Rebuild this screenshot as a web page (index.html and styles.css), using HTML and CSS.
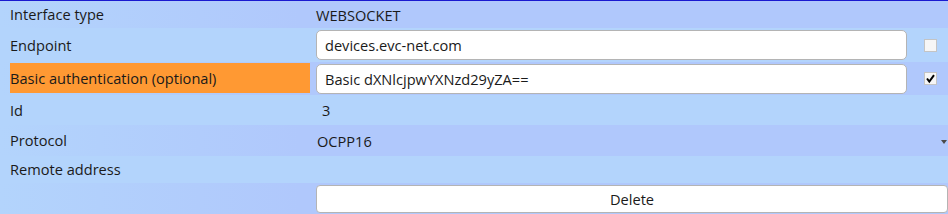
FILE: index.html
```
<html>
<head>
<link rel="stylesheet" href="styles.css">
</head>
<body>
<div id="settings">
	<div class="row odd short">
		<div class="label">Interface type</div>
		<div class="value"><span class="text">WEBSOCKET</span></div>
	</div>
	<div class="row even tall">
		<div class="label">Endpoint</div>
		<div class="value">
			<input class="field" type="text" value="devices.evc-net.com">
			<span class="check"><span class="box"></span></span>
		</div>
	</div>
	<div class="row odd tall2">
		<div class="label warn">Basic authentication (optional)</div>
		<div class="value">
			<input class="field" type="text" value="Basic dXNlcjpwYXNzd29yZA==">
			<span class="check"><span class="box">
				<svg width="11" height="11" viewBox="0 0 11 11"><path d="M2 5.5 L4.3 8.5 L9 2.2" fill="none" stroke="#000" stroke-width="2"/></svg>
			</span></span>
		</div>
	</div>
	<div class="row even mid">
		<div class="label">Id</div>
		<div class="value"><span class="text num">3</span></div>
	</div>
	<div class="row odd mid2">
		<div class="label">Protocol</div>
		<div class="value">
			<span class="text choice">OCPP16</span>
			<span class="arrow"></span>
		</div>
	</div>
	<div class="row even short">
		<div class="label">Remote address</div>
		<div class="value"></div>
	</div>
	<div class="row odd mid2">
		<div class="label"></div>
		<div class="value"><button class="delete">Delete</button></div>
	</div>
</div>
</body>
</html>
```
FILE: styles.css
```
body
{
	margin: 0;
	background-color: #b3d4fc;
	font-family: "Open Sans", "Noto Sans", sans-serif;
	font-size: 14.6px;
	color: #1a1a1a;
	overflow: hidden;
}
#settings
{
	border-top: 1px solid #1a1ad0;
}
.row
{
	display: grid;
	grid-template-columns: 300px 1fr;
	column-gap: 6px;
	align-items: center;
	padding-left: 10px;
}
.row.short { height: 27px; }
.row.mid { height: 30px; }
.row.mid2 { height: 31px; }
.row.tall { height: 34px; }
.row.tall2 { height: 33px; }
.even
{
	background-color: #b3d4fc;
}
.odd
{
	background: linear-gradient(to right, #b3d4fc 0px, #b0c8fc 300px);
}
.label
{
	align-self: stretch;
	display: flex;
	align-items: center;
	margin: 1px 0 2px 0;
}
.label.warn
{
	background-color: #ff9933;
}
.value
{
	display: flex;
	align-items: center;
	min-width: 0;
}
.num
{
	padding-left: 6px;
}
.choice
{
	padding-left: 1px;
}
.field
{
	flex: 1;
	height: 30px;
	box-sizing: border-box;
	border: 1px solid #b4b4b4;
	border-radius: 5px;
	background-color: #fff;
	padding: 0 8px;
	font-family: inherit;
	font-size: 14.6px;
	color: #1a1a1a;
	outline: none;
}
.check
{
	width: 41px;
	display: flex;
	padding-left: 17px;
	box-sizing: border-box;
}
.box
{
	width: 13px;
	height: 13px;
	box-sizing: border-box;
	border: 1px solid #c4c4c4;
	background-color: #f6f6f6;
	display: flex;
	align-items: center;
	justify-content: center;
}
.box svg
{
	display: block;
}
.arrow
{
	margin-left: auto;
	margin-right: 1px;
	margin-top: 2px;
	border-left: 3px solid transparent;
	border-right: 3px solid transparent;
	border-top: 4px solid #4a4a4a;
}
.delete
{
	width: calc(100% + 5px);
	height: 28px;
	margin-top: 1px;
	border: 1px solid #b4b4b4;
	border-radius: 4px;
	background-color: #fff;
	font-family: inherit;
	font-size: 14.6px;
	color: #1a1a1a;
}
```
